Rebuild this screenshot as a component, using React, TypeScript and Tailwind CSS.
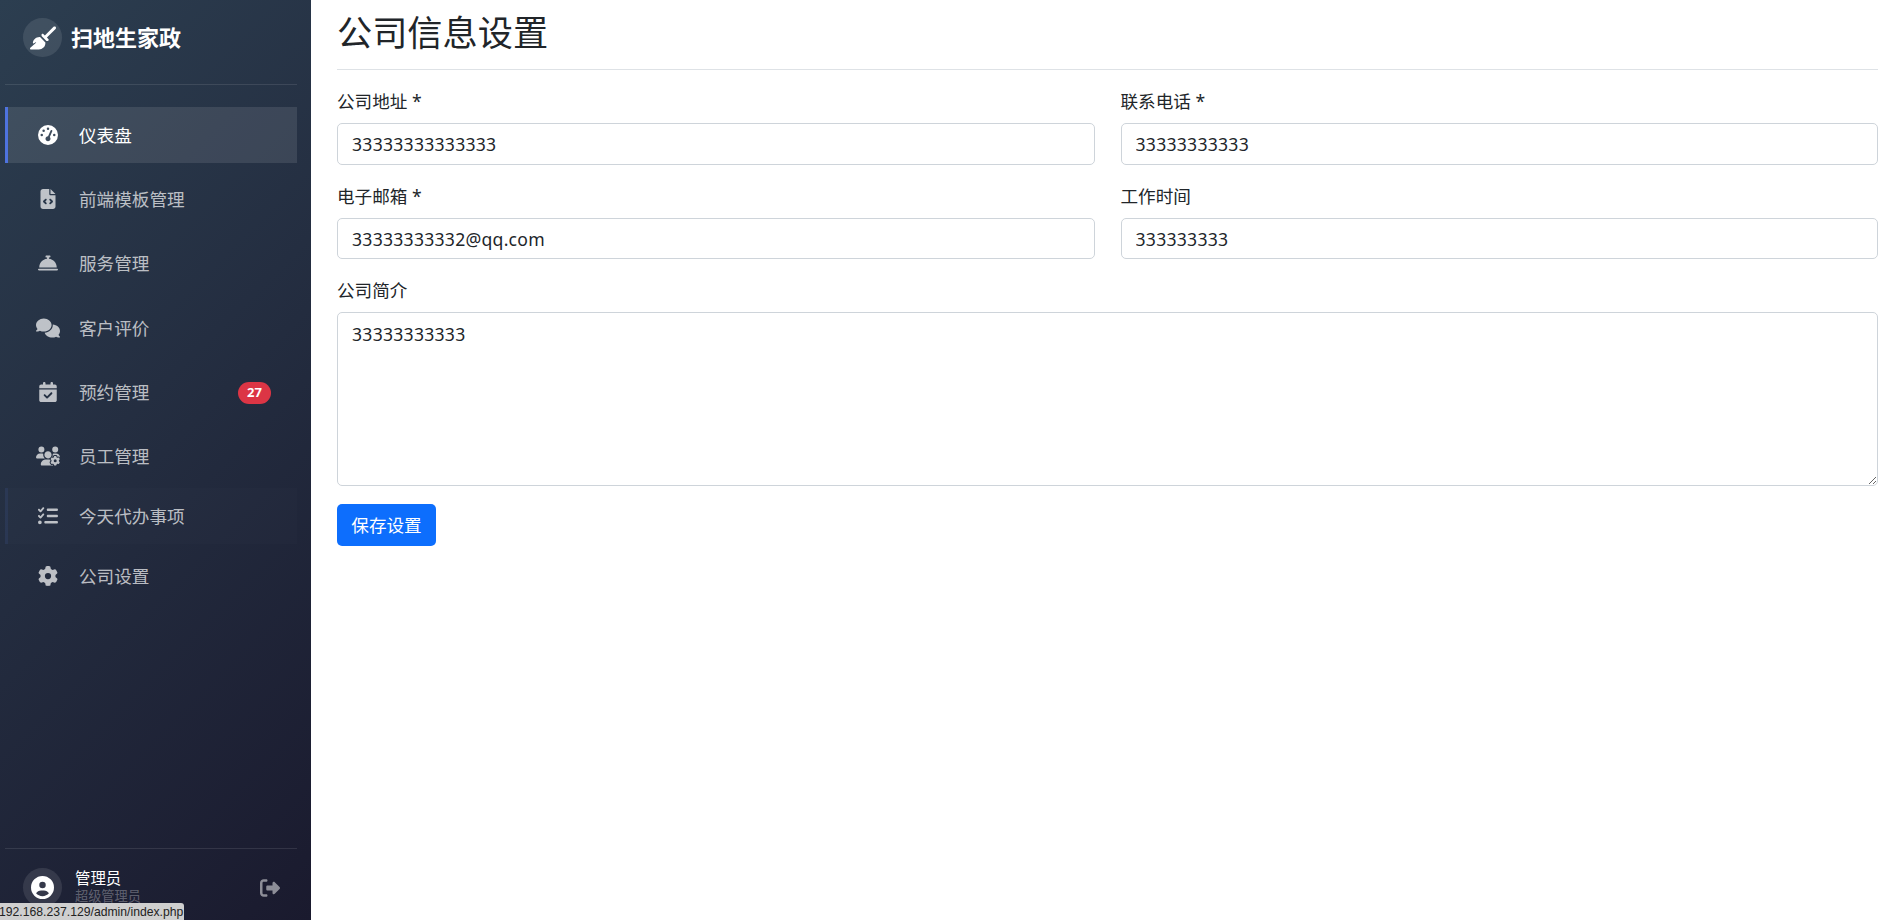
import { ReactNode } from "react";
import {
  FaBroom,
  FaBellConcierge,
  FaCalendarCheck,
  FaCircleUser,
  FaComments,
  FaFileCode,
  FaGaugeHigh,
  FaGear,
  FaListCheck,
  FaRightFromBracket,
  FaUsersGear,
} from "react-icons/fa6";

const NavItem = ({
  icon,
  label,
  active,
  hovered,
  badge,
  className = "",
}: {
  icon: ReactNode;
  label: string;
  active?: boolean;
  hovered?: boolean;
  badge?: string;
  className?: string;
}) => (
  <a
    className={`flex h-14 items-center border-l-[3px] pl-[28px] pr-[26px] text-[17.6px] ${
      active
        ? "border-[#4e73df] bg-white/10 text-white"
        : hovered
          ? "border-[#4e73df]/10 bg-white/[0.01] text-white/70"
          : "border-transparent text-white/70"
    } ${className}`}
  >
    <span className="flex w-[24px] shrink-0 justify-center">{icon}</span>
    <span className="ml-[19px] flex-1">{label}</span>
    {badge && (
      <span className="mt-[2px] flex h-[22px] w-[33px] items-center justify-center rounded-full bg-[#dc3545] text-[13px] font-bold text-white">
        {badge}
      </span>
    )}
  </a>
);

const Field = ({ label, value, inputClass }: { label: string; value: string; inputClass: string }) => (
  <div>
    <label className="mb-[9px] block h-[26px] text-[17.6px] leading-[26px] text-[#212529]">{label}</label>
    <input
      readOnly
      defaultValue={value}
      className={`block w-full rounded-[5px] border border-[#ced4da] bg-white px-[14px] text-[17.6px] tracking-[0.25px] text-[#212529] outline-none ${inputClass}`}
    />
  </div>
);

export default function App() {
  return (
    <div className="relative flex h-screen overflow-hidden bg-white font-['Noto_Sans','Noto_Sans_CJK_SC',sans-serif]">
      <aside className="flex w-[311px] shrink-0 flex-col bg-[linear-gradient(135deg,#2c3e50,#1a1a2e)] pl-[5px] pr-[14px]">
        <div className="flex h-[85px] items-start border-b border-white/10 pl-[18px] pt-[18px]">
          <span className="flex h-[39px] w-[39px] items-center justify-center rounded-full bg-white/10 text-white">
            <FaBroom size={26} />
          </span>
          <span className="ml-[9px] text-[22px] font-bold leading-[39px] text-white">扫地生家政</span>
        </div>

        <nav className="mt-[22px] flex flex-col">
          <NavItem icon={<FaGaugeHigh size={20} />} label="仪表盘" active />
          <NavItem icon={<FaFileCode size={20} />} label="前端模板管理" className="mt-2" />
          <NavItem icon={<FaBellConcierge size={20} />} label="服务管理" className="mt-2" />
          <NavItem icon={<FaComments size={24} />} label="客户评价" className="mt-[9px]" />
          <NavItem icon={<FaCalendarCheck size={20} />} label="预约管理" badge="27" className="mt-2" />
          <NavItem icon={<FaUsersGear size={24} />} label="员工管理" className="mt-2" />
          <NavItem icon={<FaListCheck size={20} />} label="今天代办事项" hovered className="mt-1" />
          <NavItem icon={<FaGear size={20} />} label="公司设置" className="mt-1" />
        </nav>

        <div className="mt-auto flex h-[72px] items-start border-t border-white/10 pl-[18px] pt-[19px]">
          <span className="flex h-[39px] w-[39px] items-center justify-center rounded-full bg-white/10 text-white">
            <FaCircleUser size={23} />
          </span>
          <div className="ml-[13px] mt-[1px] flex flex-col">
            <span className="text-[15.4px] leading-[19px] text-white">管理员</span>
            <span className="text-[13.2px] leading-[16px] text-white/30">超级管理员</span>
          </div>
          <span className="ml-auto mr-[17px] mt-[10px] text-white/50">
            <FaRightFromBracket size={20} />
          </span>
        </div>
      </aside>

      <main className="min-w-0 flex-1 pl-[26px] pr-[11px]">
        <h1 className="h-[70px] border-b border-[#dee2e6] pt-[8px] text-[35.2px] font-normal leading-[48px] text-[#212529]">
          公司信息设置
        </h1>

        <div className="mt-[18px] grid grid-cols-2 gap-x-[26px] gap-y-[18px]">
          <Field label="公司地址 *" value="33333333333333" inputClass="h-[42px]" />
          <Field label="联系电话 *" value="33333333333" inputClass="h-[42px]" />
          <Field label="电子邮箱 *" value="33333333332@qq.com" inputClass="h-[41px]" />
          <Field label="工作时间" value="333333333" inputClass="h-[41px]" />
        </div>

        <div className="mt-[18px]">
          <label className="mb-[9px] block h-[26px] text-[17.6px] leading-[26px] text-[#212529]">公司简介</label>
          <textarea
            readOnly
            defaultValue="33333333333"
            className="block h-[174px] w-full rounded-[5px] border border-[#ced4da] bg-white px-[14px] py-2 text-[17.6px] leading-[26px] tracking-[0.25px] text-[#212529] outline-none"
          />
        </div>

        <button className="mt-[18px] flex h-[42px] w-[99px] items-center justify-center rounded-[5px] bg-[#0d6efd] text-[17.6px] text-white">
          保存设置
        </button>
      </main>

      {/* browser link status bubble */}
      <div className="absolute bottom-0 left-0 h-[17px] w-[184px] overflow-hidden whitespace-nowrap rounded-tr-[3px] bg-[#cfcfcf] font-['Liberation_Sans',sans-serif] text-[12.2px] leading-[18px] text-[#222]">
        <span className="-ml-[1px] block">192.168.237.129/admin/index.php</span>
      </div>
    </div>
  );
}
